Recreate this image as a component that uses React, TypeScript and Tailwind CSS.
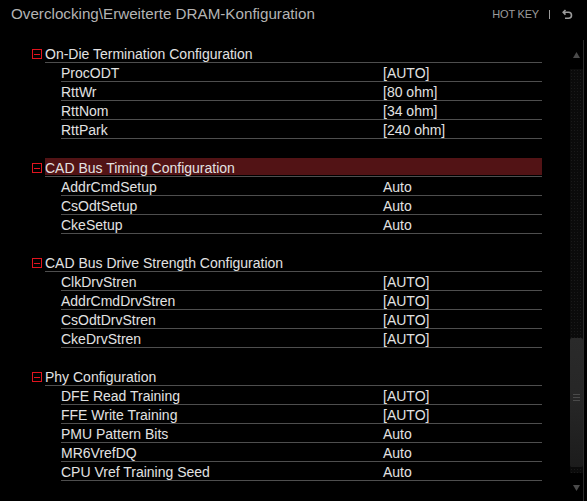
import React from "react";

type Item = { label: string; value: string };
type Section = { title: string; items: Item[]; highlight?: boolean };

const sections: Section[] = [
  {
    title: "On-Die Termination Configuration",
    items: [
      { label: "ProcODT", value: "[AUTO]" },
      { label: "RttWr", value: "[80 ohm]" },
      { label: "RttNom", value: "[34 ohm]" },
      { label: "RttPark", value: "[240 ohm]" },
    ],
  },
  {
    title: "CAD Bus Timing Configuration",
    highlight: true,
    items: [
      { label: "AddrCmdSetup", value: "Auto" },
      { label: "CsOdtSetup", value: "Auto" },
      { label: "CkeSetup", value: "Auto" },
    ],
  },
  {
    title: "CAD Bus Drive Strength Configuration",
    items: [
      { label: "ClkDrvStren", value: "[AUTO]" },
      { label: "AddrCmdDrvStren", value: "[AUTO]" },
      { label: "CsOdtDrvStren", value: "[AUTO]" },
      { label: "CkeDrvStren", value: "[AUTO]" },
    ],
  },
  {
    title: "Phy Configuration",
    items: [
      { label: "DFE Read Training", value: "[AUTO]" },
      { label: "FFE Write Training", value: "[AUTO]" },
      { label: "PMU Pattern Bits", value: "Auto" },
      { label: "MR6VrefDQ", value: "Auto" },
      { label: "CPU Vref Training Seed", value: "Auto" },
    ],
  },
];

function MinusBox() {
  return (
    <div className="w-[13px] h-[19px] flex items-start pt-[5px]">
      <div className="w-[10px] h-[10px] border border-[#e0141e] flex items-center justify-center">
        <div className="w-[6px] h-px bg-[#e0141e]" />
      </div>
    </div>
  );
}

export default function App() {
  return (
    <div
      className="w-[587px] h-[501px] bg-black text-[#e2e2e2] overflow-hidden flex flex-col"
      style={{ fontFamily: '"Liberation Sans", Arial, sans-serif' }}
    >
      <div className="h-[30px] flex items-center pl-[11px] pr-[14px]">
        <div className="text-[15.2px] text-[#b4b4b4] flex-1 leading-none pb-[2px]">
          Overclocking\Erweiterte DRAM-Konfiguration
        </div>
        <div className="text-[11px] text-[#9c9c9c] tracking-[-0.2px] leading-none pb-[2px]">
          HOT KEY
        </div>
        <div className="ml-[10px] w-px h-[9px] bg-[#9c9c9c] mb-[2px]" />
        <svg
          className="ml-[12px] mb-[2px]"
          width="11"
          height="11"
          viewBox="0 0 11 11"
          fill="none"
          stroke="#9c9c9c"
          strokeWidth="1.6"
        >
          <path d="M3.5 1 L1.2 3.3 L3.5 5.6" />
          <path d="M1.5 3.3 H6.5 A3 3 0 0 1 6.5 9.3 H3" />
        </svg>
      </div>

      <div className="flex-1 flex">
        <div className="w-[542px] pl-[32px] pt-[14px] text-[14px]">
          {sections.map((s, si) => (
            <div key={si}>
              <div className="flex">
                <MinusBox />
                <div className="flex-1 h-[19px] border-b border-[#4e4e4e]">
                  <div
                    className={
                      "h-[17px] flex items-center leading-none " +
                      (s.highlight ? "bg-[#521315]" : "")
                    }
                  >
                    <span className="pt-[2px]">{s.title}</span>
                  </div>
                </div>
              </div>
              {s.items.map((it, ii) => (
                <div
                  key={ii}
                  className="ml-[29px] h-[19px] border-b border-[#4e4e4e] flex items-center leading-none pt-[1px]"
                >
                  <div className="w-[322px]">{it.label}</div>
                  <div>{it.value}</div>
                </div>
              ))}
              {si < sections.length - 1 && <div className="h-[19px]" />}
            </div>
          ))}
        </div>

        <div className="ml-[28px] flex">
          <div className="w-[13px] flex flex-col items-center">
            <svg className="mt-[22px]" width="7" height="6" viewBox="0 0 7 6">
              <path d="M3.5 0 L7 6 H0 Z" fill="#4a4a4a" />
            </svg>
            <div
              className="mt-[11px] w-[13px] h-[404px] bg-[#0b0b0b] flex flex-col"
              style={{
                backgroundImage:
                  "radial-gradient(#1a1a1a 0.6px, transparent 0.7px)",
                backgroundSize: "3px 3px",
              }}
            >
              <div className="h-[269px]" />
              <div className="h-[129px] w-[13px] rounded-[2px] bg-gradient-to-b from-[#2a2a2a] via-[#262626] to-[#1c1c1c] flex flex-col items-center pt-[56px] gap-[2px]">
                <div className="w-[7px] h-px bg-[#4a4a4a]" />
                <div className="w-[7px] h-px bg-[#4a4a4a]" />
                <div className="w-[7px] h-px bg-[#4a4a4a]" />
              </div>
            </div>
            <svg className="mt-[12px]" width="7" height="6" viewBox="0 0 7 6">
              <path d="M0 0 H7 L3.5 6 Z" fill="#4a4a4a" />
            </svg>
          </div>
          <div className="mt-[10px] w-px bg-[#2c2c2c]" />
        </div>
      </div>
    </div>
  );
}
